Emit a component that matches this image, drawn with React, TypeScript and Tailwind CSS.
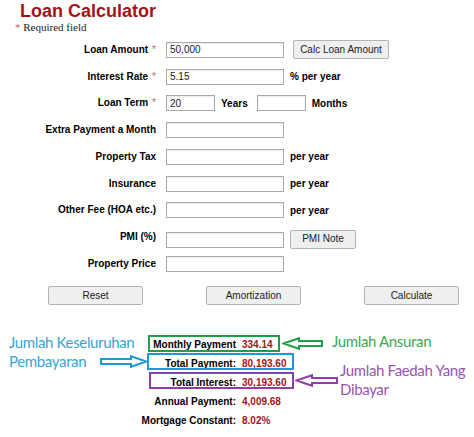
import React from 'react';

const labelCls = 'w-[156px] text-right text-[10px] font-bold text-black leading-none';
const inputCls = 'h-[16px] border border-[#a9a9a9] bg-white px-[3px] text-[10px] text-[#222] outline-none shadow-[inset_0_1px_1px_rgba(0,0,0,0.08)]';
const btnCls = 'h-[19px] border border-[#b4b4b4] bg-[#efefef] rounded-[2px] text-[10px] text-[#222] leading-none';

const Star = () => <span className="text-[#c06464] font-normal ml-[4px]">*</span>;

type Row = { label: string; star?: boolean; after?: React.ReactNode; value?: string };

const rows: Row[] = [
  { label: 'Loan Amount', star: true, value: '50,000', after: <button className={`${btnCls} ml-[9px] w-[96px]`}>Calc Loan Amount</button> },
  { label: 'Interest Rate', star: true, value: '5.15', after: <span className="ml-[6px] text-[10px] font-bold">% per year</span> },
  { label: 'Loan Term', star: true },
  { label: 'Extra Payment a Month' },
  { label: 'Property Tax', after: <span className="ml-[6px] text-[10px] font-bold">per year</span> },
  { label: 'Insurance', after: <span className="ml-[6px] text-[10px] font-bold">per year</span> },
  { label: 'Other Fee (HOA etc.)', after: <span className="ml-[6px] text-[10px] font-bold">per year</span> },
  { label: 'PMI (%)', after: <button className={`${btnCls} ml-[6px] w-[66px] mt-[4px]`}>PMI Note</button> },
  { label: 'Property Price' },
];

const results = [
  { label: 'Monthly Payment', value: '334.14' },
  { label: 'Total Payment:', value: '80,193.60' },
  { label: 'Total Interest:', value: '30,193.60' },
  { label: 'Annual Payment:', value: '4,009.68' },
  { label: 'Mortgage Constant:', value: '8.02%' },
];

const ArrowRight = ({ color }: { color: string }) => (
  <svg width="48" height="13" viewBox="0 0 48 13">
    <polygon points="1,4 31,4 31,1.2 46.5,6.5 31,11.8 31,9 1,9" fill="white" stroke={color} strokeWidth="2" strokeLinejoin="miter" />
  </svg>
);

const ArrowLeft = ({ color, w }: { color: string; w: number }) => (
  <svg width={w} height="13" viewBox={`0 0 ${w} 13`}>
    <polygon points={`1.5,6.5 17,1.2 17,4 ${w - 1},4 ${w - 1},9 17,9 17,11.8`} fill="white" stroke={color} strokeWidth="2" strokeLinejoin="miter" />
  </svg>
);

const noteFont = { fontFamily: 'Lato, "Open Sans", sans-serif' };

export default function App() {
  return (
    <div className="relative w-[474px] h-[437px] bg-white overflow-hidden" style={{ fontFamily: '"Liberation Sans", Arial, sans-serif' }}>
      <h1 className="pt-[1px] pl-[20px] text-[18px] leading-[20px] font-bold text-[#a3141a]">Loan Calculator</h1>
      <p className="pl-[15px] text-[11px] leading-[13px] text-[#222]" style={{ fontFamily: '"Liberation Serif", serif' }}>
        <span className="text-[#c06464]">*</span> Required field
      </p>

      <div className="mt-[2.6px]">
        {rows.map((r) => (
          <div key={r.label} className="flex items-center h-[26.75px]">
            <div className={labelCls}>
              {r.label}
              {r.star && <Star />}
            </div>
            <div className="ml-[10px] flex items-center">
              {r.label === 'Loan Term' ? (
                <>
                  <input className={`${inputCls} w-[49px]`} defaultValue="20" />
                  <span className="ml-[6px] text-[10px] font-bold">Years</span>
                  <input className={`${inputCls} w-[49px] ml-[9px]`} defaultValue="" />
                  <span className="ml-[6px] text-[10px] font-bold">Months</span>
                </>
              ) : (
                <>
                  <input className={`${inputCls} w-[118px] ${r.label === 'PMI (%)' ? 'mt-[6px]' : ''}`} defaultValue={r.value ?? ''} />
                  {r.after}
                </>
              )}
            </div>
          </div>
        ))}
      </div>

      <div className="flex items-center pl-[48px] gap-[63px] mt-[9px]">
        <button className={`${btnCls} w-[95px]`}>Reset</button>
        <button className={`${btnCls} w-[95px]`}>Amortization</button>
        <button className={`${btnCls} w-[95px]`}>Calculate</button>
      </div>

      <div className="mt-[30px]">
        {results.map((r) => (
          <div key={r.label} className="flex items-center h-[19px]">
            <div className="w-[236px] text-right text-[10px] font-bold text-black">{r.label}</div>
            <div className="ml-[6px] text-[10px] font-bold text-[#a3141a]">{r.value}</div>
          </div>
        ))}
      </div>

      {/* annotation overlays */}
      <div className="absolute left-[148px] top-[335px] w-[132px] h-[17px] border-2 border-[#1fa048]" />
      <div className="absolute left-[147px] top-[353px] w-[147px] h-[17px] border-2 border-[#1a9ad8]" />
      <div className="absolute left-[149px] top-[372px] w-[145px] h-[17px] border-2 border-[#8e3fa0]" />

      <div className="absolute left-[100px] top-[355px]"><ArrowRight color="#1a9ad8" /></div>
      <div className="absolute left-[282px] top-[337px]"><ArrowLeft color="#1fa048" w={41} /></div>
      <div className="absolute left-[295px] top-[374px]"><ArrowLeft color="#8e3fa0" w={43} /></div>

      <div className="absolute left-[9px] top-[333px] text-[15px] leading-[19px] tracking-[-0.35px] text-[#3aa3d6]" style={noteFont}>
        Jumlah Keseluruhan<br />Pembayaran
      </div>
      <div className="absolute left-[332px] top-[332px] text-[15px] leading-[19px] tracking-[-0.35px] text-[#3aa85a]" style={noteFont}>
        Jumlah Ansuran
      </div>
      <div className="absolute left-[340px] top-[361px] text-[15px] leading-[19px] tracking-[-0.35px] text-[#9656b0]" style={noteFont}>
        Jumlah Faedah Yang<br />Dibayar
      </div>
    </div>
  );
}
